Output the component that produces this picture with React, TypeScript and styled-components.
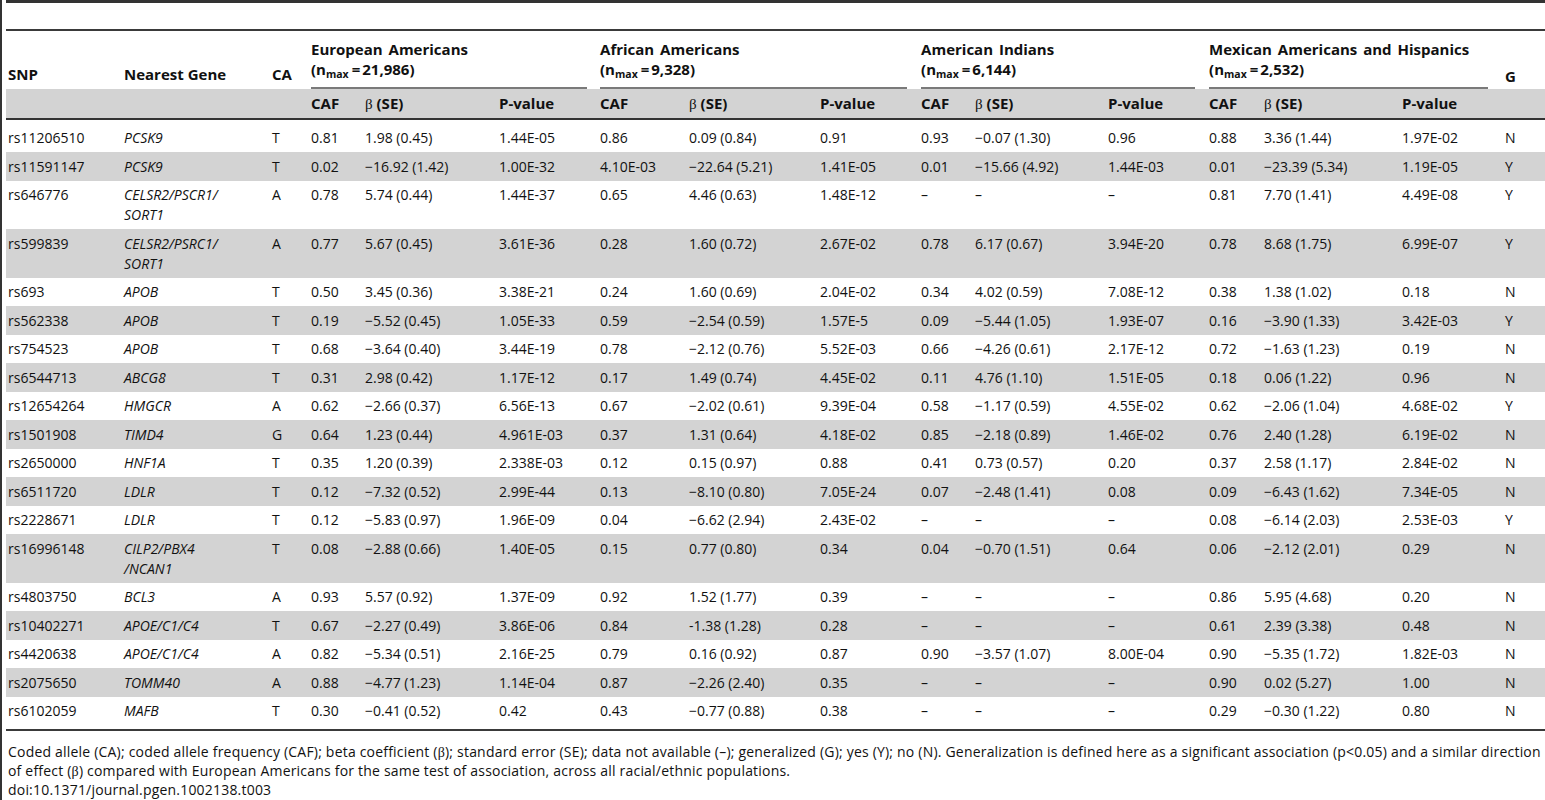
import styled, { createGlobalStyle } from "styled-components";

interface Population {
  name: string;
  n: string;
  gap: number;
}

interface SnpRow {
  snp: string;
  gene: string;
  ca: string;
  values: string[];
  g: string;
}

const populations: Population[] = [
  { name: "European Americans", n: "21,986", gap: 13 },
  { name: "African Americans", n: "9,328", gap: 14 },
  { name: "American Indians", n: "6,144", gap: 14 },
  { name: "Mexican Americans and Hispanics", n: "2,532", gap: 17 },
];

// widths of the 16 columns, left to right
const columnWidths = [118, 148, 39, 54, 134, 101, 89, 131, 101, 54, 133, 101, 55, 138, 103, 40];

const rows: SnpRow[] = [
  { snp: "rs11206510", gene: "PCSK9", ca: "T", values: ["0.81", "1.98 (0.45)", "1.44E-05", "0.86", "0.09 (0.84)", "0.91", "0.93", "−0.07 (1.30)", "0.96", "0.88", "3.36 (1.44)", "1.97E-02"], g: "N" },
  { snp: "rs11591147", gene: "PCSK9", ca: "T", values: ["0.02", "−16.92 (1.42)", "1.00E-32", "4.10E-03", "−22.64 (5.21)", "1.41E-05", "0.01", "−15.66 (4.92)", "1.44E-03", "0.01", "−23.39 (5.34)", "1.19E-05"], g: "Y" },
  { snp: "rs646776", gene: "CELSR2/PSCR1/\nSORT1", ca: "A", values: ["0.78", "5.74 (0.44)", "1.44E-37", "0.65", "4.46 (0.63)", "1.48E-12", "–", "–", "–", "0.81", "7.70 (1.41)", "4.49E-08"], g: "Y" },
  { snp: "rs599839", gene: "CELSR2/PSRC1/\nSORT1", ca: "A", values: ["0.77", "5.67 (0.45)", "3.61E-36", "0.28", "1.60 (0.72)", "2.67E-02", "0.78", "6.17 (0.67)", "3.94E-20", "0.78", "8.68 (1.75)", "6.99E-07"], g: "Y" },
  { snp: "rs693", gene: "APOB", ca: "T", values: ["0.50", "3.45 (0.36)", "3.38E-21", "0.24", "1.60 (0.69)", "2.04E-02", "0.34", "4.02 (0.59)", "7.08E-12", "0.38", "1.38 (1.02)", "0.18"], g: "N" },
  { snp: "rs562338", gene: "APOB", ca: "T", values: ["0.19", "−5.52 (0.45)", "1.05E-33", "0.59", "−2.54 (0.59)", "1.57E-5", "0.09", "−5.44 (1.05)", "1.93E-07", "0.16", "−3.90 (1.33)", "3.42E-03"], g: "Y" },
  { snp: "rs754523", gene: "APOB", ca: "T", values: ["0.68", "−3.64 (0.40)", "3.44E-19", "0.78", "−2.12 (0.76)", "5.52E-03", "0.66", "−4.26 (0.61)", "2.17E-12", "0.72", "−1.63 (1.23)", "0.19"], g: "N" },
  { snp: "rs6544713", gene: "ABCG8", ca: "T", values: ["0.31", "2.98 (0.42)", "1.17E-12", "0.17", "1.49 (0.74)", "4.45E-02", "0.11", "4.76 (1.10)", "1.51E-05", "0.18", "0.06 (1.22)", "0.96"], g: "N" },
  { snp: "rs12654264", gene: "HMGCR", ca: "A", values: ["0.62", "−2.66 (0.37)", "6.56E-13", "0.67", "−2.02 (0.61)", "9.39E-04", "0.58", "−1.17 (0.59)", "4.55E-02", "0.62", "−2.06 (1.04)", "4.68E-02"], g: "Y" },
  { snp: "rs1501908", gene: "TIMD4", ca: "G", values: ["0.64", "1.23 (0.44)", "4.961E-03", "0.37", "1.31 (0.64)", "4.18E-02", "0.85", "−2.18 (0.89)", "1.46E-02", "0.76", "2.40 (1.28)", "6.19E-02"], g: "N" },
  { snp: "rs2650000", gene: "HNF1A", ca: "T", values: ["0.35", "1.20 (0.39)", "2.338E-03", "0.12", "0.15 (0.97)", "0.88", "0.41", "0.73 (0.57)", "0.20", "0.37", "2.58 (1.17)", "2.84E-02"], g: "N" },
  { snp: "rs6511720", gene: "LDLR", ca: "T", values: ["0.12", "−7.32 (0.52)", "2.99E-44", "0.13", "−8.10 (0.80)", "7.05E-24", "0.07", "−2.48 (1.41)", "0.08", "0.09", "−6.43 (1.62)", "7.34E-05"], g: "N" },
  { snp: "rs2228671", gene: "LDLR", ca: "T", values: ["0.12", "−5.83 (0.97)", "1.96E-09", "0.04", "−6.62 (2.94)", "2.43E-02", "–", "–", "–", "0.08", "−6.14 (2.03)", "2.53E-03"], g: "Y" },
  { snp: "rs16996148", gene: "CILP2/PBX4\n/NCAN1", ca: "T", values: ["0.08", "−2.88 (0.66)", "1.40E-05", "0.15", "0.77 (0.80)", "0.34", "0.04", "−0.70 (1.51)", "0.64", "0.06", "−2.12 (2.01)", "0.29"], g: "N" },
  { snp: "rs4803750", gene: "BCL3", ca: "A", values: ["0.93", "5.57 (0.92)", "1.37E-09", "0.92", "1.52 (1.77)", "0.39", "–", "–", "–", "0.86", "5.95 (4.68)", "0.20"], g: "N" },
  { snp: "rs10402271", gene: "APOE/C1/C4", ca: "T", values: ["0.67", "−2.27 (0.49)", "3.86E-06", "0.84", "-1.38 (1.28)", "0.28", "–", "–", "–", "0.61", "2.39 (3.38)", "0.48"], g: "N" },
  { snp: "rs4420638", gene: "APOE/C1/C4", ca: "A", values: ["0.82", "−5.34 (0.51)", "2.16E-25", "0.79", "0.16 (0.92)", "0.87", "0.90", "−3.57 (1.07)", "8.00E-04", "0.90", "−5.35 (1.72)", "1.82E-03"], g: "N" },
  { snp: "rs2075650", gene: "TOMM40", ca: "A", values: ["0.88", "−4.77 (1.23)", "1.14E-04", "0.87", "−2.26 (2.40)", "0.35", "–", "–", "–", "0.90", "0.02 (5.27)", "1.00"], g: "N" },
  { snp: "rs6102059", gene: "MAFB", ca: "T", values: ["0.30", "−0.41 (0.52)", "0.42", "0.43", "−0.77 (0.88)", "0.38", "–", "–", "–", "0.29", "−0.30 (1.22)", "0.80"], g: "N" },
];

function App() {
  return (
    <Frame>
      <GlobalStyle />
      <Sheet>
        <TitleBand />
        <Table>
          <colgroup>
            {columnWidths.map((w, i) => (
              <col key={i} style={{ width: w }} />
            ))}
          </colgroup>
          <thead>
            <tr>
              <HeadCell>SNP</HeadCell>
              <HeadCell>Nearest Gene</HeadCell>
              <HeadCell>CA</HeadCell>
              {populations.map((p) => (
                <GroupCell key={p.name} colSpan={3}>
                  <GroupLabel $gap={p.gap}>
                    {p.name}
                    <br />
                    (n<Sub>max</Sub>
                    <Equals>=</Equals>
                    {p.n})
                  </GroupLabel>
                </GroupCell>
              ))}
              <HeadCell $low>G</HeadCell>
            </tr>
            <tr>
              <SubCell />
              <SubCell />
              <SubCell />
              {populations.map((p) => [
                <SubCell key={p.name + "caf"}>CAF</SubCell>,
                <SubCell key={p.name + "b"}>
                  <Beta>β</Beta> (SE)
                </SubCell>,
                <SubCell key={p.name + "p"}>P-value</SubCell>,
              ])}
              <SubCell />
            </tr>
          </thead>
          <tbody>
            {rows.map((r, i) => (
              <DataRow key={r.snp} $shaded={i % 2 === 1}>
                <Cell>{r.snp}</Cell>
                <GeneCell>{r.gene}</GeneCell>
                <Cell>{r.ca}</Cell>
                {r.values.map((v, j) => (
                  <Cell key={j}>{v}</Cell>
                ))}
                <Cell>{r.g}</Cell>
              </DataRow>
            ))}
          </tbody>
        </Table>
        <Footnote>
          <FootLine>
            Coded allele (CA); coded allele frequency (CAF); beta coefficient (<Beta>β</Beta>); standard error (SE); data not
            available (–); generalized (G); yes (Y); no (N). Generalization is defined here as a significant association
            (p&lt;0.05) and a similar direction
          </FootLine>
          <FootLine>
            of effect (<Beta>β</Beta>) compared with European Americans for the same test of association, across all
            racial/ethnic populations.
          </FootLine>
          <FootLine>doi:10.1371/journal.pgen.1002138.t003</FootLine>
        </Footnote>
      </Sheet>
    </Frame>
  );
}

const GlobalStyle = createGlobalStyle`
  html, body {
    margin: 0;
    padding: 0;
    background: #ffffff;
  }

  body {
    font-family: "Open Sans", "Liberation Sans", sans-serif;
    color: #111111;
  }
`;

const Frame = styled.div`
  min-height: 100vh;
  box-sizing: border-box;
  border-left: 2px solid #333333;
  padding-left: 4px;
  overflow: hidden;
`;

const Sheet = styled.div`
  display: flex;
  flex-direction: column;
`;

const TitleBand = styled.div`
  height: 26px;
  border-top: 3px solid #333333;
  border-bottom: 2px solid #3a3a3a;
`;

const Table = styled.table`
  width: 1539px;
  table-layout: fixed;
  border-collapse: separate;
  border-spacing: 0;
  font-size: 14px;
  line-height: 20px;

  td:first-child,
  th:first-child {
    padding-left: 2px;
  }
`;

const HeadCell = styled.th<{ $low?: boolean }>`
  text-align: left;
  vertical-align: bottom;
  font-size: 15px;
  font-weight: 700;
  padding: 0 0 ${(p) => (p.$low ? "3px" : "5px")} 0;
  white-space: nowrap;
`;

const GroupCell = styled.th`
  text-align: left;
  vertical-align: bottom;
  font-size: 15px;
  font-weight: 700;
  padding: 8px 0 0 0;
`;

const GroupLabel = styled.div<{ $gap: number }>`
  margin-right: ${(p) => p.$gap}px;
  padding-bottom: 8px;
  border-bottom: 2px solid #7a7a7a;
  white-space: nowrap;
  word-spacing: 2px;
`;

const Sub = styled.sub`
  font-size: 10.5px;
  line-height: 0;
  vertical-align: -3px;
  word-spacing: 0;
`;

const Equals = styled.span`
  margin: 0 2px 0 3px;
`;

const SubCell = styled.th`
  background: #d3d3d3;
  text-align: left;
  font-size: 15px;
  font-weight: 700;
  height: 31px;
  box-sizing: border-box;
  padding: 0 0 2px 0;
  border-bottom: 2px solid #333333;
  white-space: nowrap;
`;

const Beta = styled.span`
  font-family: "Liberation Serif", "DejaVu Serif", serif;
  font-weight: 400;
  line-height: 0;
`;

const DataRow = styled.tr<{ $shaded: boolean }>`
  background: ${(p) => (p.$shaded ? "#d3d3d3" : "#ffffff")};

  &:first-child td {
    padding-top: 8px;
  }

  &:last-child td {
    padding-bottom: 8px;
    border-bottom: 2px solid #3a3a3a;
  }
`;

const Cell = styled.td`
  padding: 4.25px 0;
  vertical-align: top;
  white-space: nowrap;
`;

const GeneCell = styled(Cell)`
  font-style: italic;
  white-space: pre-line;
`;

const Footnote = styled.div`
  padding: 11px 0 0 2px;
  font-size: 14px;
  line-height: 19px;
  letter-spacing: 0.2px;
`;

const FootLine = styled.div`
  height: 19px;
  white-space: nowrap;
`;

export default App;
